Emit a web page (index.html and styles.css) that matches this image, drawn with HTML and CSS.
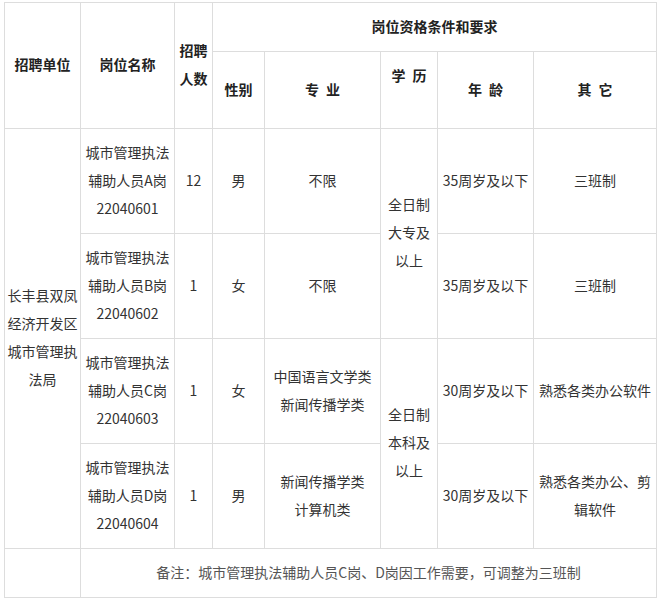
FILE: index.html
```html
<!DOCTYPE html>
<html lang="zh">
<head>
<meta charset="utf-8">
<link rel="stylesheet" href="styles.css">
</head>
<body>
<table class="jobs">
  <colgroup>
    <col class="c-unit"><col class="c-name"><col class="c-num"><col class="c-sex"><col class="c-major"><col class="c-edu"><col class="c-age"><col class="c-other">
  </colgroup>
  <thead>
    <tr class="h1">
      <th rowspan="2">招聘单位</th>
      <th rowspan="2">岗位名称</th>
      <th rowspan="2">招聘<br>人数</th>
      <th colspan="5">岗位资格条件和要求</th>
    </tr>
    <tr class="h2">
      <th>性别</th>
      <th>专&ensp;业</th>
      <th>学&ensp;历<br>&nbsp;</th>
      <th>年&ensp;龄</th>
      <th>其&ensp;它</th>
    </tr>
  </thead>
  <tbody>
    <tr class="row">
      <td rowspan="4">长丰县双凤<br>经济开发区<br>城市管理执<br>法局</td>
      <td>城市管理执法<br>辅助人员A岗<br>22040601</td>
      <td>12</td>
      <td>男</td>
      <td>不限</td>
      <td rowspan="2">全日制<br>大专及<br>以上</td>
      <td>35周岁及以下</td>
      <td>三班制</td>
    </tr>
    <tr class="row">
      <td>城市管理执法<br>辅助人员B岗<br>22040602</td>
      <td>1</td>
      <td>女</td>
      <td>不限</td>
      <td>35周岁及以下</td>
      <td>三班制</td>
    </tr>
    <tr class="row">
      <td>城市管理执法<br>辅助人员C岗<br>22040603</td>
      <td>1</td>
      <td>女</td>
      <td>中国语言文学类<br>新闻传播学类</td>
      <td rowspan="2">全日制<br>本科及<br>以上</td>
      <td>30周岁及以下</td>
      <td>熟悉各类办公软件</td>
    </tr>
    <tr class="row">
      <td>城市管理执法<br>辅助人员D岗<br>22040604</td>
      <td>1</td>
      <td>男</td>
      <td>新闻传播学类<br>计算机类</td>
      <td>30周岁及以下</td>
      <td>熟悉各类办公、剪<br>辑软件</td>
    </tr>
    <tr class="foot">
      <td></td>
      <td colspan="7">备注：城市管理执法辅助人员C岗、D岗因工作需要，可调整为三班制</td>
    </tr>
  </tbody>
</table>
</body>
</html>
```

FILE: styles.css
```css
html, body {
  margin: 0;
  padding: 0;
  background: #fff;
}
body {
  padding: 2px 0 0 4px;
  font-family: "Noto Sans CJK SC", "Noto Sans", sans-serif;
  font-size: 14px;
  color: #333;
}
.jobs {
  border-collapse: collapse;
  table-layout: fixed;
  width: 653px;
}
.c-unit { width: 76px; }
.c-name { width: 94px; }
.c-num { width: 38px; }
.c-sex { width: 52px; }
.c-major { width: 116px; }
.c-edu { width: 57px; }
.c-age { width: 96px; }
.c-other { width: 123px; }

.jobs th, .jobs td {
  border: 1px solid #ddd;
  text-align: center;
  vertical-align: middle;
  line-height: 28px;
  padding: 0 0 3px;
  white-space: nowrap;
  overflow: hidden;
}
.jobs th {
  font-weight: bold;
  color: #222;
}
.h1 { height: 49px; }
.h2 { height: 77px; }
.row { height: 105px; }
.foot { height: 49px; }
.foot td { color: #555; }
```
